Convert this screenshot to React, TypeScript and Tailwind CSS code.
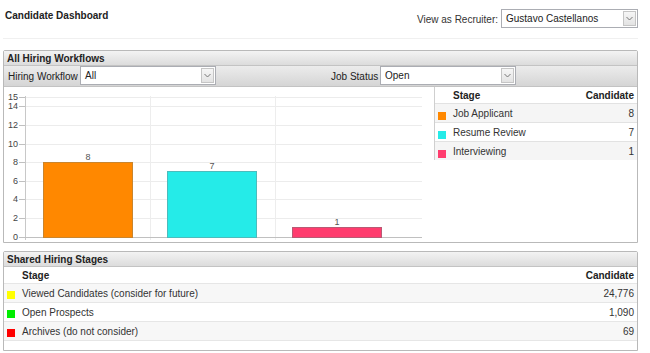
import React from "react";

function Select({ value, w }: { value: string; w: string }) {
  return (
    <div className={`${w} h-[19px] bg-white border border-[#abadb3] flex items-center relative`}>
      <span className="pl-[4px] pt-[1px] text-[10px] text-[#222] leading-none">{value}</span>
      <div className="absolute right-[1px] top-[1px] bottom-[1px] w-[13px] border border-[#c5c5c5] bg-gradient-to-b from-[#f6f6f6] to-[#e3e3e3] flex items-center justify-center">
        <svg width="7" height="5" viewBox="0 0 7 5">
          <path d="M0.5 1 L3.5 4 L6.5 1" fill="none" stroke="#777" strokeWidth="1" />
        </svg>
      </div>
    </div>
  );
}

const vals = [0, 2, 4, 6, 8, 10, 12, 14, 15];
const yv = (v: number) => 149.5 - 9.3 * v;

function Chart() {
  const bars = [
    { x: 39.5, v: 8, fill: "#ff8800", stroke: "#c9852e" },
    { x: 163.5, v: 7, fill: "#25ebe8", stroke: "#4cbcbc" },
    { x: 288.5, v: 1, fill: "#ff3c6e", stroke: "#b85a74" },
  ];
  return (
    <svg width="420" height="154" viewBox="0 0 420 154" className="block">
      {vals.map((v) => (
        <line key={"g" + v} x1="21" x2="418" y1={Math.round(yv(v)) + 0.5} y2={Math.round(yv(v)) + 0.5} stroke="#ececec" />
      ))}
      <line x1="146.5" x2="146.5" y1="9" y2="153" stroke="#ededed" />
      <line x1="271.5" x2="271.5" y1="9" y2="153" stroke="#ededed" />
      <line x1="21.5" x2="21.5" y1="9" y2="153" stroke="#c8c8c8" />
      <line x1="21" x2="418" y1="150.5" y2="150.5" stroke="#c0c0c0" />
      {vals.map((v) => (
        <g key={"t" + v}>
          <line x1="15" x2="21" y1={Math.round(yv(v)) + 0.5} y2={Math.round(yv(v)) + 0.5} stroke="#c0c0c0" />
          <text x="14" y={yv(v) + 3} textAnchor="end" fontSize="9" fill="#444" fontFamily="Liberation Sans, Arial, sans-serif">
            {v}
          </text>
        </g>
      ))}
      {bars.map((b) => (
        <g key={b.x}>
          <rect x={b.x} y={Math.round(yv(b.v)) + 0.5} width="89" height={150 - Math.round(yv(b.v))} fill={b.fill} stroke={b.stroke} />
          <text x={b.x + 44.5} y={Math.round(yv(b.v)) - 2} textAnchor="middle" fontSize="9" fill="#555" fontFamily="Liberation Sans, Arial, sans-serif">
            {b.v}
          </text>
        </g>
      ))}
    </svg>
  );
}

function PanelHeader({ title }: { title: string }) {
  return (
    <div className="h-[15px] bg-gradient-to-b from-[#f3f3f3] to-[#dcdcdc] border-b border-[#c3c3c3] flex items-center pl-[3px] font-bold text-[10px] text-[#222]">
      {title}
    </div>
  );
}

export default function App() {
  const legend = [
    { c: "#ff8800", n: "Job Applicant", v: "8", bg: "bg-[#f5f5f5]" },
    { c: "#25ebe8", n: "Resume Review", v: "7", bg: "bg-white" },
    { c: "#ff3c6e", n: "Interviewing", v: "1", bg: "bg-[#f5f5f5]" },
  ];
  const shared = [
    { c: "#ffff00", n: "Viewed Candidates (consider for future)", v: "24,776", bg: "bg-[#f7f7f7]" },
    { c: "#00ee00", n: "Open Prospects", v: "1,090", bg: "bg-white" },
    { c: "#ff0000", n: "Archives (do not consider)", v: "69", bg: "bg-[#f7f7f7]" },
  ];
  return (
    <div className="w-[650px] h-[353px] bg-white overflow-hidden font-['Liberation_Sans',Arial,sans-serif] text-[10px] text-[#333]">
      <div className="ml-[3px] w-[635px]">
        {/* top bar */}
        <div className="h-[39px] flex justify-between items-start border-b border-[#f0f0f0]">
          <div className="mt-[10px] ml-[2px] font-bold text-[10px] leading-[12px] text-[#222]">Candidate Dashboard</div>
          <div className="mt-[9px] flex items-center gap-[3px]">
            <span className="text-[#333] pt-[1px]">View as Recruiter:</span>
            <Select value="Gustavo Castellanos" w="w-[137px]" />
          </div>
        </div>

        {/* panel 1 */}
        <div className="mt-[11px] border border-[#b9b9b9] rounded-t-[2px]">
          <PanelHeader title="All Hiring Workflows" />
          <div className="h-[21px] bg-gradient-to-b from-[#ececec] to-[#d5d5d5] border-b border-[#c3c3c3] flex items-center">
            <span className="ml-[4px] w-[72px] text-[#222]">Hiring Workflow</span>
            <div className="mt-[-1px]">
              <Select value="All" w="w-[136px]" />
            </div>
            <span className="ml-[115px] w-[49px] text-[#222]">Job Status</span>
            <div className="mt-[-1px]">
              <Select value="Open" w="w-[136px]" />
            </div>
          </div>
          <div className="h-[155px] flex">
            <div className="w-[420px]">
              <Chart />
            </div>
            <div className="ml-[10px] w-[203px] self-start border-l border-[#cfcfcf]">
              <div className="h-[16px] flex items-center font-bold text-[#222] bg-white">
                <span className="ml-[18px]">Stage</span>
                <span className="ml-auto mr-[3px]">Candidate</span>
              </div>
              {legend.map((r) => (
                <div key={r.n} className={`h-[19px] flex ${r.bg} border-t border-[#e2e2e2]`}>
                  <div className="w-[18px] flex items-end pb-[2px] pl-[3px]">
                    <div className="w-[8px] h-[8px]" style={{ background: r.c }} />
                  </div>
                  <span className="mt-[2px]">{r.n}</span>
                  <span className="ml-auto mr-[3px] mt-[2px]">{r.v}</span>
                </div>
              ))}
            </div>
          </div>
        </div>

        {/* panel 2 */}
        <div className="mt-[8px] border border-[#b9b9b9] rounded-t-[2px] h-[100px]">
          <PanelHeader title="Shared Hiring Stages" />
          <div className="h-[16px] flex items-center font-bold text-[#222]">
            <span className="ml-[18px]">Stage</span>
            <span className="ml-auto mr-[3px]">Candidate</span>
          </div>
          {shared.map((r) => (
            <div key={r.n} className={`h-[19px] flex ${r.bg} border-t border-[#e6e6e6]`}>
              <div className="w-[18px] flex items-end pb-[3px] pl-[3px]">
                <div className="w-[8px] h-[8px]" style={{ background: r.c }} />
              </div>
              <span className="mt-[2px]">{r.n}</span>
              <span className="ml-auto mr-[3px] mt-[2px]">{r.v}</span>
            </div>
          ))}
          <div className="border-t border-[#e6e6e6]" />
        </div>
      </div>
    </div>
  );
}
